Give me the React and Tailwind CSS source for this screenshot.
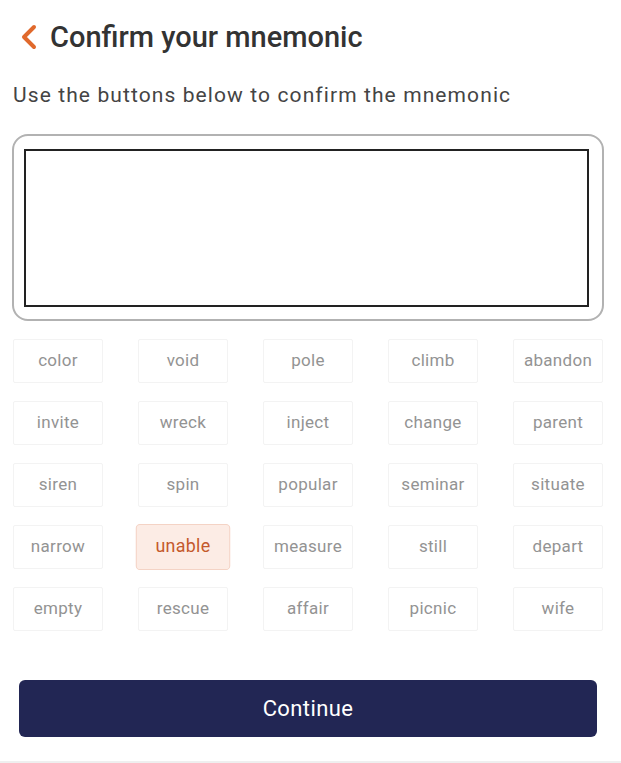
import React from "react";

const words = [
  "color", "void", "pole", "climb", "abandon",
  "invite", "wreck", "inject", "change", "parent",
  "siren", "spin", "popular", "seminar", "situate",
  "narrow", "unable", "measure", "still", "depart",
  "empty", "rescue", "affair", "picnic", "wife",
];

function WordButton({ word, active }) {
  if (active) {
    return (
      <button className="h-[44px] scale-[1.05] rounded-[4px] border border-[#f4d3c5] bg-[#fcece5] text-[17px] tracking-[0.3px] text-[#c4592c]">
        {word}
      </button>
    );
  }
  return (
    <button className="h-[44px] rounded-[2px] border border-[#f3f3f3] bg-white text-[17px] tracking-[0.3px] text-[#939393]">
      {word}
    </button>
  );
}

export default function App() {
  return (
    <div
      className="relative h-[763px] w-[621px] overflow-hidden bg-white"
      style={{ fontFamily: "Roboto, 'Noto Sans', sans-serif" }}
    >
      <header className="flex items-center pl-[19px] pt-[19px]">
        <svg width="20" height="28" viewBox="0 0 20 28" className="mr-[11px]">
          <path
            d="M15 4 L5 14 L15 24"
            fill="none"
            stroke="#e0692c"
            strokeWidth="4"
            strokeLinecap="round"
            strokeLinejoin="round"
          />
        </svg>
        <h1 className="text-[29px] font-medium leading-[36px] text-[#333333]">
          Confirm your mnemonic
        </h1>
      </header>

      <p className="mt-[26px] pl-[13px] text-[21px] leading-[28px] tracking-[1.1px] text-[#444444]">
        Use the buttons below to confirm the mnemonic
      </p>

      <div className="mx-[12px] mt-[25px] h-[187px] w-[592px] rounded-[16px] border-2 border-[#b2b2b2] pb-[12px] pl-[10px] pr-[13px] pt-[13px]">
        <div className="h-full w-full border-2 border-[#222222]"></div>
      </div>

      <div className="mx-[13px] mt-[18px] grid w-[590px] grid-cols-5 gap-x-[35px] gap-y-[18px]">
        {words.map((w) => (
          <WordButton key={w} word={w} active={w === "unable"} />
        ))}
      </div>

      <div className="px-[19px] pt-[49px]">
        <button className="flex h-[57px] w-[578px] items-center justify-center rounded-[6px] bg-[#222654] text-[22px] tracking-[0.4px] text-white">
          Continue
        </button>
      </div>

      <div className="absolute bottom-0 left-0 h-[2px] w-full bg-[#efefef]"></div>
    </div>
  );
}
